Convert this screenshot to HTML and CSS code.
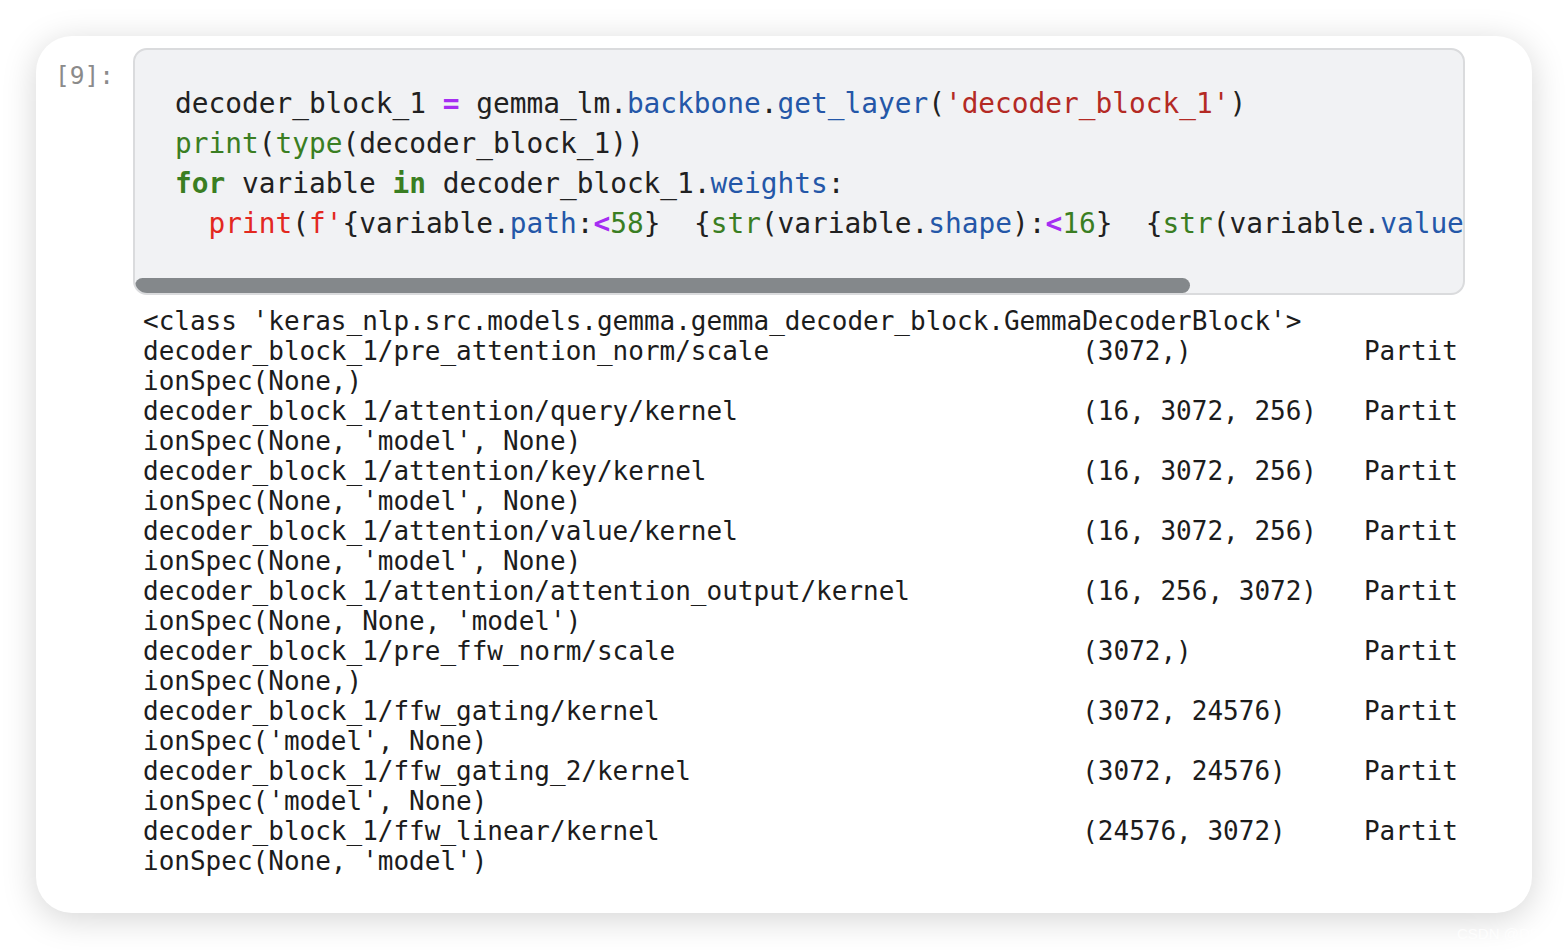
FILE: index.html
```html
<!DOCTYPE html>
<html lang="en">
<head>
<meta charset="utf-8">
<title>Notebook cell</title>
<link rel="stylesheet" href="styles.css">
</head>
<body>
<div class="page">
  <div class="card">
    <div class="cell">
      <div class="prompt">[9]:</div>
      <div class="editor">
        <div class="code-scroll">
<pre class="code">decoder_block_1 <span class="op">=</span> gemma_lm.<span class="prop">backbone</span>.<span class="prop">get_layer</span>(<span class="str">'decoder_block_1'</span>)
<span class="bi">print</span>(<span class="bi">type</span>(decoder_block_1))
<span class="kw">for</span> variable <span class="kw">in</span> decoder_block_1.<span class="prop">weights</span>:
  <span class="err">print</span>(<span class="err">f'</span>{variable.<span class="prop">path</span>:<span class="op">&lt;</span><span class="num">58</span>}  {<span class="bi">str</span>(variable.<span class="prop">shape</span>):<span class="op">&lt;</span><span class="num">16</span>}  {<span class="bi">str</span>(variable.<span class="prop">value</span>.<span class="prop">sharding</span>)}<span class="err">'</span>)</pre>
        </div>
        <div class="scrollbar"><div class="thumb"></div></div>
      </div>
    </div>
    <div class="output-row">
<pre class="output">&lt;class 'keras_nlp.src.models.gemma.gemma_decoder_block.GemmaDecoderBlock'&gt;
decoder_block_1/pre_attention_norm/scale                    (3072,)           PartitionSpec(None,)
decoder_block_1/attention/query/kernel                      (16, 3072, 256)   PartitionSpec(None, 'model', None)
decoder_block_1/attention/key/kernel                        (16, 3072, 256)   PartitionSpec(None, 'model', None)
decoder_block_1/attention/value/kernel                      (16, 3072, 256)   PartitionSpec(None, 'model', None)
decoder_block_1/attention/attention_output/kernel           (16, 256, 3072)   PartitionSpec(None, None, 'model')
decoder_block_1/pre_ffw_norm/scale                          (3072,)           PartitionSpec(None,)
decoder_block_1/ffw_gating/kernel                           (3072, 24576)     PartitionSpec('model', None)
decoder_block_1/ffw_gating_2/kernel                         (3072, 24576)     PartitionSpec('model', None)
decoder_block_1/ffw_linear/kernel                           (24576, 3072)     PartitionSpec(None, 'model')</pre>
    </div>
  </div>
  <div class="watermark">CSDN @DD</div>
</div>
</body>
</html>
```
FILE: styles.css
```css
html, body {
  margin: 0;
  padding: 0;
  background: #ffffff;
}

.page {
  position: relative;
  width: 1568px;
  height: 950px;
  padding: 36px 0 0 36px;
  box-sizing: border-box;
}

.card {
  width: 1496px;
  box-sizing: border-box;
  background: #ffffff;
  border-radius: 36px;
  box-shadow: 0 6px 34px rgba(0, 0, 0, 0.17);
  padding: 12px 67px 37px 19px;
}

.cell {
  display: grid;
  grid-template-columns: 78px 1332px;
}

.prompt {
  font-family: "DejaVu Sans Mono", monospace;
  font-size: 24.5px;
  line-height: 30px;
  color: #8b8b8b;
  padding-top: 13px;
}

.editor {
  height: 247px;
  box-sizing: border-box;
  border: 2px solid #dadbdd;
  border-radius: 14px;
  background: #f1f2f4;
  display: flex;
  flex-direction: column;
  overflow: hidden;
}

.code-scroll {
  overflow: hidden;
  padding-top: 34px;
  flex: 1;
}

.code {
  margin: 0;
  padding-left: 40px;
  font-family: "DejaVu Sans Mono", monospace;
  font-size: 27.8px;
  line-height: 40px;
  color: #212121;
  white-space: pre;
}

.op { color: #a52ef2; font-weight: bold; }
.prop { color: #2457a8; }
.str { color: #b42a24; }
.bi { color: #3a7e22; }
.kw { color: #3a7e22; font-weight: bold; }
.num { color: #3a7e22; }
.err { color: #e3281f; }

.scrollbar {
  height: 15px;
  flex: none;
}

.thumb {
  width: 1055px;
  height: 15px;
  border-radius: 8px;
  background: #84888b;
}

.output-row {
  padding: 11px 0 0 88px;
}

.output {
  margin: 0;
  width: 84.5ch;
  font-family: "DejaVu Sans Mono", monospace;
  font-size: 26px;
  line-height: 30px;
  color: #1c1c1c;
  white-space: pre-wrap;
  word-break: break-all;
}

.watermark {
  position: absolute;
  left: 1457px;
  top: 925px;
  font-family: "Liberation Sans", Arial, sans-serif;
  font-size: 15px;
  color: rgba(255, 255, 255, 0.75);
}
```
